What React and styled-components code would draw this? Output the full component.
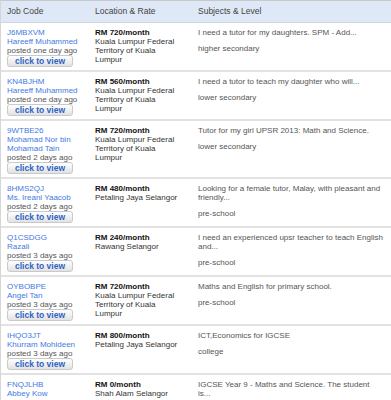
import React from "react";
import styled, { createGlobalStyle } from "styled-components";

const GlobalStyle = createGlobalStyle`
  body {
    margin: 0;
    background: #fff;
    font-family: "Liberation Sans", Arial, sans-serif;
  }
`;

const jobs = [
  {
    code: "J6MBXVM",
    name: "Hareeff Muhammed",
    posted: "posted one day ago",
    rate: "RM 720/month",
    place: "Kuala Lumpur Federal Territory of Kuala Lumpur",
    desc: "I need a tutor for my daughters. SPM - Add...",
    level: "higher secondary",
  },
  {
    code: "KN4BJHM",
    name: "Hareeff Muhammed",
    posted: "posted one day ago",
    rate: "RM 560/month",
    place: "Kuala Lumpur Federal Territory of Kuala Lumpur",
    desc: "I need a tutor to teach my daughter who will...",
    level: "lower secondary",
  },
  {
    code: "9WTBE26",
    name: "Mohamad Nor bin Mohamad Tain",
    posted: "posted 2 days ago",
    rate: "RM 720/month",
    place: "Kuala Lumpur Federal Territory of Kuala Lumpur",
    desc: "Tutor for my girl UPSR 2013: Math and Science.",
    level: "lower secondary",
  },
  {
    code: "8HMS2QJ",
    name: "Ms. Ireani Yaacob",
    posted: "posted 2 days ago",
    rate: "RM 480/month",
    place: "Petaling Jaya Selangor",
    desc: "Looking for a female tutor, Malay, with pleasant and friendly...",
    level: "pre-school",
  },
  {
    code: "Q1CSDGG",
    name: "Razali",
    posted: "posted 3 days ago",
    rate: "RM 240/month",
    place: "Rawang Selangor",
    desc: "I need an experienced upsr teacher to teach English and...",
    level: "pre-school",
  },
  {
    code: "OYBOBPE",
    name: "Angel Tan",
    posted: "posted 3 days ago",
    rate: "RM 720/month",
    place: "Kuala Lumpur Federal Territory of Kuala Lumpur",
    desc: "Maths and English for primary school.",
    level: "pre-school",
  },
  {
    code: "IHQO3JT",
    name: "Khurram Mohideen",
    posted: "posted 3 days ago",
    rate: "RM 800/month",
    place: "Petaling Jaya Selangor",
    desc: "ICT,Economics for IGCSE",
    level: "college",
  },
  {
    code: "FNQJLHB",
    name: "Abbey Kow",
    posted: "posted 3 days ago",
    rate: "RM 0/month",
    place: "Shah Alam Selangor",
    desc: "IGCSE Year 9 - Maths and Science. The student is...",
    level: "lower secondary",
  },
];

export default function App() {
  return (
    <>
      <GlobalStyle />
      <Table>
        <HeadRow>
          <HeadCell>Job Code</HeadCell>
          <HeadCell>Location &amp; Rate</HeadCell>
          <HeadCell>Subjects &amp; Level</HeadCell>
        </HeadRow>
        {jobs.map((job) => (
          <Row key={job.code}>
            <Cell>
              <Link>{job.code}</Link>
              <Link>{job.name}</Link>
              <Muted>{job.posted}</Muted>
              <ViewButton>click to view</ViewButton>
            </Cell>
            <Cell>
              <Rate>{job.rate}</Rate>
              <Place>{job.place}</Place>
            </Cell>
            <Cell>
              <Desc>{job.desc}</Desc>
              <Desc>{job.level}</Desc>
            </Cell>
          </Row>
        ))}
      </Table>
    </>
  );
}

const Table = styled.div`
  width: 410px;
  border-left: 1px solid #d6d6d6;
  border-top: 1px solid #c8c8c8;
  font-size: 8px;
  line-height: 9px;
`;

const Grid = styled.div`
  display: grid;
  grid-template-columns: 94px 102px 1fr;
`;

const HeadRow = styled(Grid)`
  background: #dfe8f6;
  height: 21px;
  align-items: center;
  border-bottom: 1px solid #d0d6de;
`;

const HeadCell = styled.div`
  padding-left: 6px;
  font-size: 8.5px;
  color: #444;
  &:nth-child(2) {
    padding-left: 0;
  }
  &:nth-child(3) {
    padding-left: 1px;
  }
`;

const Row = styled(Grid)`
  padding: 5px 0 3px;
  border-bottom: 2px solid #e2e2e2;
`;

const Cell = styled.div`
  display: flex;
  flex-direction: column;
  align-items: flex-start;
  padding-left: 6px;
  &:nth-child(2) {
    padding-left: 0;
    padding-right: 14px;
  }
  &:nth-child(3) {
    padding-left: 1px;
    padding-right: 28px;
    gap: 7px;
  }
`;

const Link = styled.span`
  color: #4479e2;
  padding-right: 10px;
`;

const Muted = styled.span`
  color: #555;
`;

const ViewButton = styled.button`
  width: 66px;
  height: 12px;
  padding: 0;
  border: 1px solid #c9c9c9;
  border-radius: 3px;
  background: linear-gradient(#ffffff, #e2e2e2);
  color: #2f63c4;
  font-family: "Liberation Sans", Arial, sans-serif;
  font-size: 8.5px;
  font-weight: bold;
  line-height: 10px;
  cursor: pointer;
`;

const Rate = styled.span`
  font-weight: bold;
  color: #111;
`;

const Place = styled.span`
  color: #333;
`;

const Desc = styled.span`
  color: #555;
`;
